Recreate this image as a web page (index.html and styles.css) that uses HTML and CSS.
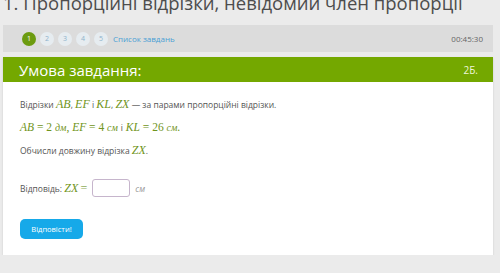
FILE: index.html
```html
<!DOCTYPE html>
<html lang="uk">
<head>
  <meta charset="UTF-8" />
  <meta name="viewport" content="width=device-width, initial-scale=1.0" />
  <title>Пропорційні відрізки</title>
  <link rel="stylesheet" href="styles.css">
</head>
<body>

  <h1 class="page-title">1. Пропорційні відрізки, невідомий член пропорції</h1>

  <div class="task-nav">
    <div class="task-steps">
      <span class="step active">1</span>
      <span class="step">2</span>
      <span class="step">3</span>
      <span class="step">4</span>
      <span class="step">5</span>
      <a class="task-list" href="#">Список завдань</a>
    </div>
    <span class="timer">00:45:30</span>
  </div>

  <div class="task">
    <div class="task-head">
      <span>Умова завдання:</span>
      <span class="points">2Б.</span>
    </div>
    <div class="task-body">
      <p>Відрізки <span class="m">AB</span>, <span class="m">EF</span> і <span class="m">KL</span>, <span class="m">ZX</span> — за парами пропорційні відрізки.</p>
      <p class="formula"><span class="m">AB</span> = 2 <span class="u">дм</span>, <span class="m">EF</span> = 4 <span class="u">см</span> <span class="txt">і</span> <span class="m">KL</span> = 26 <span class="u">см</span>.</p>
      <p>Обчисли довжину відрізка <span class="m">ZX</span>.</p>

      <form class="answer" onsubmit="event.preventDefault();">
        <label for="answer">Відповідь: <span class="m">ZX</span> <span class="eq">=</span></label>
        <input type="text" id="answer">
        <span class="unit">см</span>
      </form>

      <button type="button" class="submit">Відповісти!</button>
    </div>
  </div>

</body>
</html>
```

FILE: styles.css
```css
body {
  font-family: "Open Sans", "Liberation Sans", sans-serif;
  background-color: #ebebeb;
  color: #555;
  margin: 0;
  padding: 0 7px 0 3px;
}

.page-title {
  font-size: 18.5px;
  font-weight: normal;
  color: #4d4d4d;
  line-height: 28px;
  margin: -11px 0 8px 0;
  white-space: nowrap;
}

.task-nav {
  height: 27px;
  background-color: #dcdcdc;
  display: flex;
  align-items: center;
  justify-content: space-between;
  padding: 0 10px 0 19px;
}

.task-steps {
  display: flex;
  align-items: center;
  gap: 4px;
}

.step {
  width: 14px;
  height: 14px;
  border-radius: 50%;
  background-color: #e6ecf0;
  color: #8fb3cc;
  font-size: 7px;
  display: flex;
  align-items: center;
  justify-content: center;
}

.step.active {
  background-color: #6c9b0f;
  color: #fff;
}

.task-list {
  margin-left: 1px;
  font-size: 8px;
  color: #4a9fd5;
  text-decoration: none;
}

.timer {
  font-size: 8px;
  color: #666;
}

.task {
  margin-top: 5px;
  background-color: #fff;
  box-shadow: 0 1px 2px rgba(0,0,0,0.12);
}

.task-head {
  height: 25px;
  background-color: #74a800;
  color: #fff;
  display: flex;
  align-items: center;
  justify-content: space-between;
  padding: 0 15px 0 16px;
  font-size: 15px;
}

.task-head .points {
  font-size: 10px;
  color: #eef6d8;
}

.task-body {
  padding: 16px 17px 16px 17px;
  font-size: 8.5px;
}

.task-body p {
  margin: 0 0 10px 0;
  line-height: 13px;
}

.m,
.u,
.formula,
.eq {
  font-family: "Liberation Serif", "DejaVu Serif", serif;
  color: #6f9420;
}

.m {
  font-style: italic;
  font-size: 12px;
}

.u {
  font-style: italic;
  font-size: 10px;
}

.formula {
  font-size: 11.5px;
}

.formula .m {
  font-size: 11.5px;
}

.formula .txt {
  font-family: "Open Sans", sans-serif;
  font-size: 8.5px;
  color: #555;
}

.eq {
  font-size: 12px;
  color: #8fae5a;
}

.answer {
  margin-top: 22px;
  display: flex;
  align-items: center;
  gap: 5px;
}

.answer input {
  width: 38px;
  height: 18px;
  padding: 0;
  border: 1px solid #c6b5cc;
  border-radius: 3px;
  box-sizing: border-box;
}

.unit {
  font-size: 8.5px;
  color: #999;
  font-style: italic;
}

.submit {
  margin-top: 22px;
  width: 63px;
  height: 20px;
  border: none;
  border-radius: 5px;
  background-color: #16a9e9;
  color: #fff;
  font-family: "Open Sans", sans-serif;
  font-size: 7.5px;
  cursor: pointer;
}
```
